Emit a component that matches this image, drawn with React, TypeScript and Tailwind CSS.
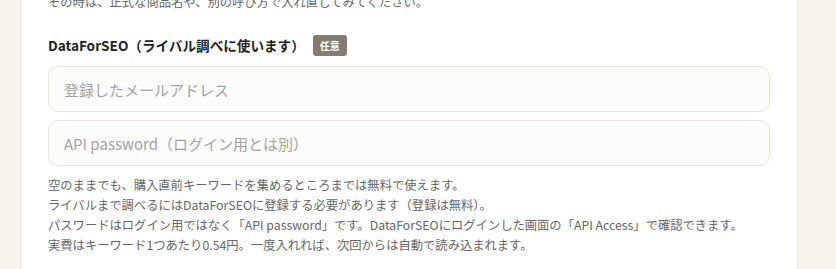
import React from 'react';

const FONT = { fontFamily: '"Noto Sans CJK JP", "Noto Sans", sans-serif' };

function Field({ placeholder }: { placeholder: string }) {
  return (
    <input
      type="text"
      placeholder={placeholder}
      className="h-[46px] w-full rounded-[10px] border border-[#ece5d7] bg-[#fcfcfb] px-[15px] text-[15px] text-[#333] outline-none placeholder:text-[#a3a3a3]"
      style={FONT}
    />
  );
}

export default function App() {
  return (
    <div className="h-[269px] overflow-hidden bg-[#f8f5ee] pl-5 pr-[38px]" style={FONT}>
      <div className="-mt-[8px] min-h-[300px] border-x border-[#ebe4d8] bg-white px-[27px]">
        <p className="text-[12.3px] leading-5 text-[#666]">
          その時は、正式な商品名や、別の呼び方で入れ直してみてください。
        </p>

        <div className="mt-[23px] flex h-[21px] items-center">
          <span className="text-[13.6px] font-bold text-[#222]">DataForSEO（ライバル調べに使います）</span>
          <span className="ml-2 flex h-[21px] items-center rounded-[3px] bg-[#847c71] px-[7px] text-[10px] font-bold text-white">
            任意
          </span>
        </div>

        <div className="mt-[10px] flex flex-col gap-2">
          <Field placeholder="登録したメールアドレス" />
          <Field placeholder="API password（ログイン用とは別）" />
        </div>

        <div className="mt-[9px] text-[12.3px] leading-5 text-[#666]">
          <p>空のままでも、購入直前キーワードを集めるところまでは無料で使えます。</p>
          <p>ライバルまで調べるにはDataForSEOに登録する必要があります（登録は無料）。</p>
          <p>パスワードはログイン用ではなく「API password」です。DataForSEOにログインした画面の「API Access」で確認できます。</p>
          <p>実費はキーワード1つあたり0.54円。一度入れれば、次回からは自動で読み込まれます。</p>
        </div>
      </div>
    </div>
  );
}
